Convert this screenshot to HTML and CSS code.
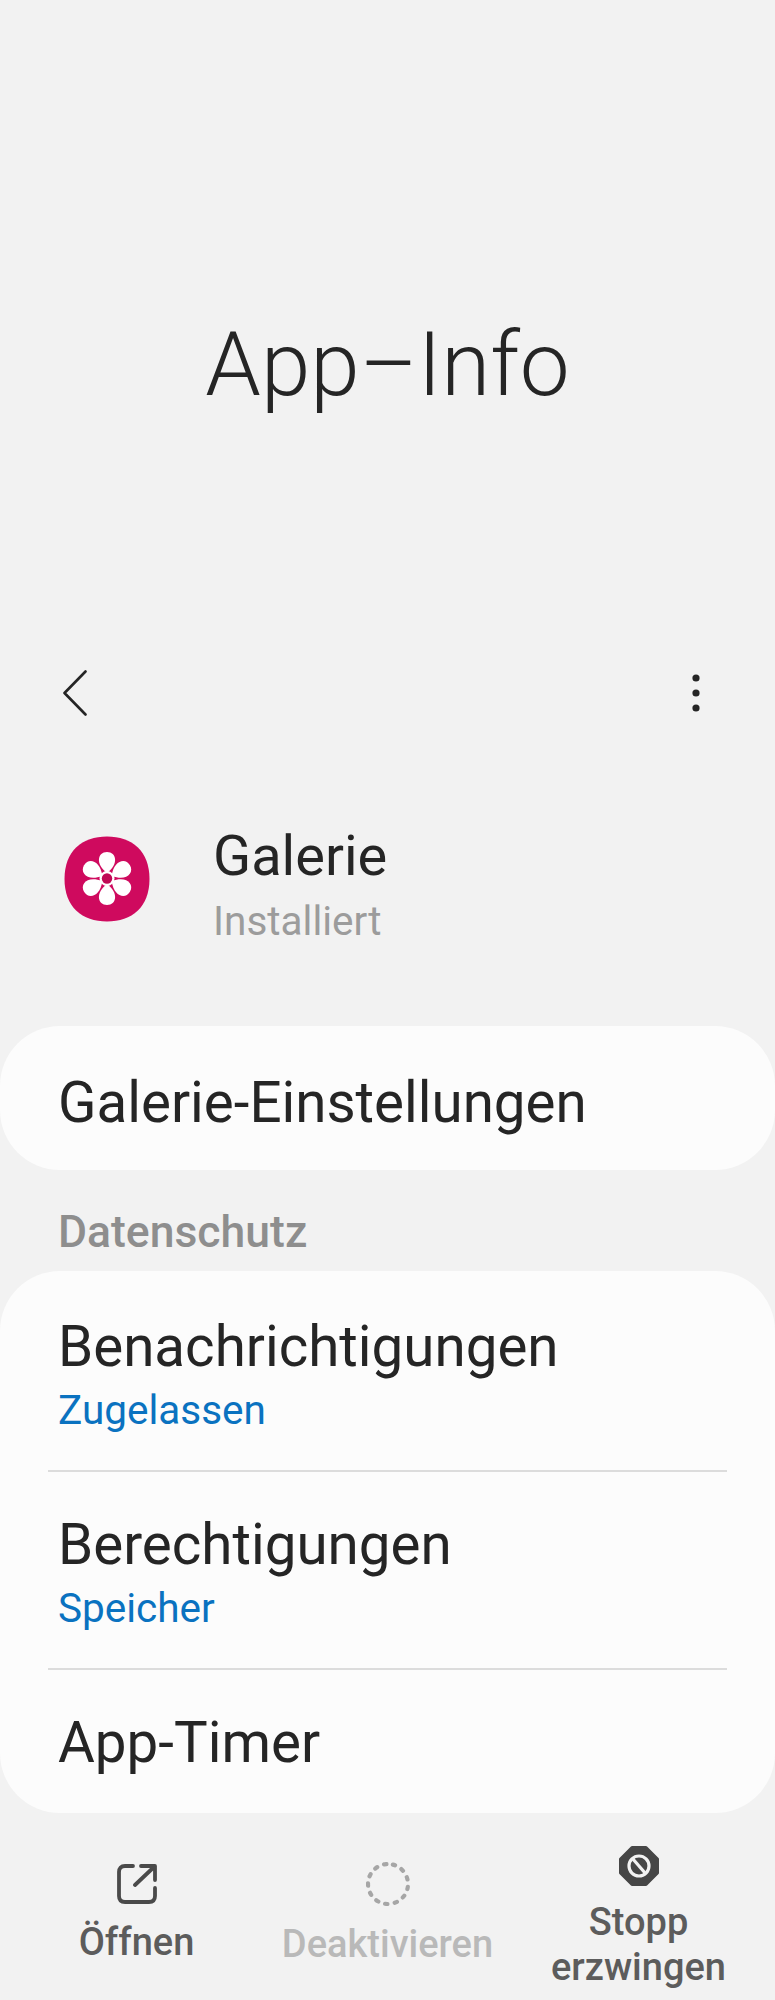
FILE: index.html
```html
<!DOCTYPE html>
<html lang="de">
<head>
  <meta charset="UTF-8">
  <title>App-Info</title>
  <link rel="stylesheet" href="styles.css">
</head>
<body>

  <!-- Titel -->
  <div class="hero">
    <h1>App–Info</h1>
  </div>

  <!-- Toolbar -->
  <div class="toolbar">
    <svg class="back" width="24" height="46" viewBox="0 0 24 46">
      <path d="M22.5 1.5 L1.5 23 L22.5 44.5" fill="none" stroke="#252525" stroke-width="2.6" stroke-linecap="round" stroke-linejoin="round"/>
    </svg>
    <svg class="more" width="8" height="38" viewBox="0 0 8 38">
      <circle cx="4" cy="4" r="3.6" fill="#252525"/>
      <circle cx="4" cy="19" r="3.6" fill="#252525"/>
      <circle cx="4" cy="34" r="3.6" fill="#252525"/>
    </svg>
  </div>

  <!-- App -->
  <div class="app-row">
    <svg class="app-icon" width="86" height="86" viewBox="0 0 86 86">
      <path d="M43 0.5 C68 0.5 85.5 15 85.5 43 C85.5 71 68 85.5 43 85.5 C18 85.5 0.5 71 0.5 43 C0.5 15 18 0.5 43 0.5 Z" fill="#cf0a5e"/>
      <g fill="#fff">
        <path d="M43 37 C31 28 33.500 16 43 16 C52.500 16 55 28 43 37 Z"/>
        <path d="M43 37 C31 28 33.500 16 43 16 C52.500 16 55 28 43 37 Z" transform="rotate(60 43 42.500)"/>
        <path d="M43 37 C31 28 33.500 16 43 16 C52.500 16 55 28 43 37 Z" transform="rotate(120 43 42.500)"/>
        <path d="M43 37 C31 28 33.500 16 43 16 C52.500 16 55 28 43 37 Z" transform="rotate(180 43 42.500)"/>
        <path d="M43 37 C31 28 33.500 16 43 16 C52.500 16 55 28 43 37 Z" transform="rotate(240 43 42.500)"/>
        <path d="M43 37 C31 28 33.500 16 43 16 C52.500 16 55 28 43 37 Z" transform="rotate(300 43 42.500)"/>
        <circle cx="43" cy="42.500" r="7.500"/>
      </g>
      <circle cx="43" cy="42.500" r="5.200" fill="#c00955"/>
    </svg>
    <div>
      <div class="app-name">Galerie</div>
      <div class="app-status">Installiert</div>
    </div>
  </div>

  <div class="card card-single">
    <div class="row-title">Galerie-Einstellungen</div>
  </div>

  <div class="section-label">Datenschutz</div>

  <div class="card card-list">
    <div class="row">
      <div class="row-title">Benachrichtigungen</div>
      <div class="row-sub">Zugelassen</div>
    </div>
    <div class="row">
      <div class="row-title">Berechtigungen</div>
      <div class="row-sub">Speicher</div>
    </div>
    <div class="row row-last">
      <div class="row-title">App-Timer</div>
    </div>
  </div>

  <!-- Untere Leiste -->
  <div class="bottom-bar">
    <div class="action">
      <svg width="40" height="40" viewBox="0 0 40 40">
        <path d="M16 2 H8 Q2 2 2 8 V32 Q2 38 8 38 H32 Q38 38 38 32 V24" fill="none" stroke="#4a4a4a" stroke-width="3.800" stroke-linecap="round"/>
        <path d="M24 2 H38 V16 M37.500 2.500 L18 21" fill="none" stroke="#4a4a4a" stroke-width="3.800" stroke-linecap="round" stroke-linejoin="round"/>
      </svg>
      <span>Öffnen</span>
    </div>
    <div class="action action-off">
      <svg width="44" height="44" viewBox="0 0 44 44">
        <circle cx="22" cy="22" r="20" fill="none" stroke="#a6a6a6" stroke-width="4.200" stroke-linecap="round" stroke-dasharray="2.400 7.267" transform="rotate(-76 22 22)"/>
      </svg>
      <span>Deaktivieren</span>
    </div>
    <div class="action action-stop">
      <svg width="40" height="40" viewBox="0 0 40 40">
        <path d="M13 1.500 H27 L38.500 13 V27 L27 38.500 H13 L1.500 27 V13 Z" fill="#464646" stroke="#464646" stroke-width="3" stroke-linejoin="round"/>
        <circle cx="20" cy="20" r="10" fill="none" stroke="#f2f2f2" stroke-width="3.200"/>
        <path d="M13.500 12.500 L26.500 27.500" stroke="#f2f2f2" stroke-width="3.200"/>
      </svg>
      <span>Stopp<br>erzwingen</span>
    </div>
  </div>

</body>
</html>
```

FILE: styles.css
```css
body {
  margin: 0;
  background-color: #f2f2f2;
  color: #252525;
  font-family: "Roboto", "Liberation Sans", sans-serif;
}
.hero {
  height: 670px;
  box-sizing: border-box;
  padding-top: 305px;
  text-align: center;
}
h1 {
  margin: 0;
  font-size: 89px;
  font-weight: 300;
  line-height: 120px;
}
.toolbar {
  display: flex;
  justify-content: space-between;
  align-items: center;
  padding: 0 75px 0 63px;
}
.app-row {
  display: flex;
  align-items: flex-start;
  gap: 63px;
  margin-top: 110px;
  padding-left: 64px;
}
.app-icon {
  margin-top: 10px;
}
.app-name {
  font-size: 56px;
  line-height: 60px;
}
.app-status {
  margin-top: 10px;
  font-size: 40.5px;
  line-height: 50px;
  color: #9c9c9c;
}
.card {
  background-color: #fcfcfc;
  border-radius: 60px;
  box-sizing: border-box;
}
.card-single {
  display: flex;
  align-items: center;
  height: 144px;
  margin-top: 80px;
  padding: 9px 48px 0 58px;
}
.card-list {
  padding: 3px 48px 0;
}
.section-label {
  padding: 37px 58px 14px;
  font-size: 44.5px;
  font-weight: 500;
  line-height: 50px;
  color: #8e8e8e;
}
.row {
  height: 198px;
  box-sizing: border-box;
  padding: 37px 10px 0;
  border-bottom: 2px solid #dcdcdc;
}
.row-last {
  height: 143px;
  border-bottom: 0;
}
.row-title {
  font-size: 56.5px;
  line-height: 72px;
}
.row-sub {
  margin-top: 2px;
  font-size: 40.5px;
  line-height: 50px;
  color: #0a72c0;
}
.bottom-bar {
  display: grid;
  grid-template-columns: repeat(3, 1fr);
  align-items: center;
  height: 187px;
  box-sizing: border-box;
  padding: 16px 11px 0;
}
.action {
  display: flex;
  flex-direction: column;
  align-items: center;
  gap: 16px;
  font-size: 38px;
  font-weight: 500;
  line-height: 45px;
  text-align: center;
  color: #5c5c5c;
}
.action-off {
  color: #b9b9b9;
}
.action-stop {
  gap: 14px;
  padding-top: 6px;
}
```
